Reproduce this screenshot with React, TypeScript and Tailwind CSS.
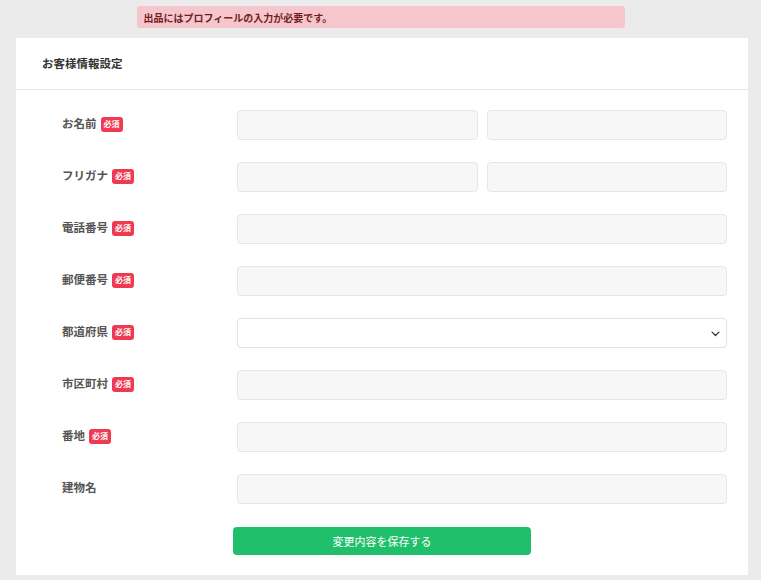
import React from "react";

const font = { fontFamily: '"Noto Sans CJK JP", "Noto Sans", sans-serif' };

function Badge() {
  return (
    <span className="ml-[4px] inline-flex h-[15px] items-center rounded-[3px] bg-[#f03a52] px-[3px] text-[8px] font-bold leading-none text-white">
      必須
    </span>
  );
}

function Field({ double }: { double?: boolean }) {
  const cls = "h-[30px] rounded-[4px] border border-[#e6e6e6] bg-[#f7f7f7]";
  if (double)
    return (
      <div className="flex flex-1 gap-[9px]">
        <div className={cls + " flex-1"} />
        <div className={cls + " flex-1"} />
      </div>
    );
  return <div className={cls + " flex-1"} />;
}

function Select() {
  return (
    <div className="flex h-[30px] flex-1 items-center justify-end rounded-[4px] border border-[#e3e3e3] bg-white pr-[5px]">
      <svg width="11" height="11" viewBox="0 0 16 16" fill="none">
        <path d="M3 6l5 5 5-5" stroke="#343a40" strokeWidth="2" strokeLinecap="round" strokeLinejoin="round" />
      </svg>
    </div>
  );
}

const rows: { label: string; req: boolean; kind: "double" | "single" | "select" }[] = [
  { label: "お名前", req: true, kind: "double" },
  { label: "フリガナ", req: true, kind: "double" },
  { label: "電話番号", req: true, kind: "single" },
  { label: "郵便番号", req: true, kind: "single" },
  { label: "都道府県", req: true, kind: "select" },
  { label: "市区町村", req: true, kind: "single" },
  { label: "番地", req: true, kind: "single" },
  { label: "建物名", req: false, kind: "single" },
];

export default function App() {
  return (
    <div className="min-h-[580px] w-[761px] bg-[#ebebeb] pt-[6px]" style={font}>
      <div className="mx-auto flex h-[22px] w-[488px] items-center rounded-[3px] bg-[#f5c6cb] px-[7px] text-[10px] font-bold text-[#721c24]">
        出品にはプロフィールの入力が必要です。
      </div>
      <div className="ml-[16px] mt-[10px] w-[732px] bg-white pb-[20px]">
        <div className="flex h-[52px] items-center border-b border-[#e8e8e8] pl-[26px] text-[11.5px] font-bold text-[#333]">
          お客様情報設定
        </div>
        <div className="flex flex-col gap-[22px] pl-[46px] pr-[21px] pt-[20px]">
          {rows.map((r) => (
            <div key={r.label} className="flex items-center">
              <div className="flex w-[175px] items-center pb-[2px] text-[11.5px] font-bold text-[#555]">
                {r.label}
                {r.req && <Badge />}
              </div>
              {r.kind === "double" ? <Field double /> : r.kind === "select" ? <Select /> : <Field />}
            </div>
          ))}
        </div>
        <div className="mt-[23px] flex justify-center">
          <button className="h-[28px] w-[298px] rounded-[4px] bg-[#20bf6b] text-[11px] font-normal text-white">
            変更内容を保存する
          </button>
        </div>
      </div>
    </div>
  );
}
